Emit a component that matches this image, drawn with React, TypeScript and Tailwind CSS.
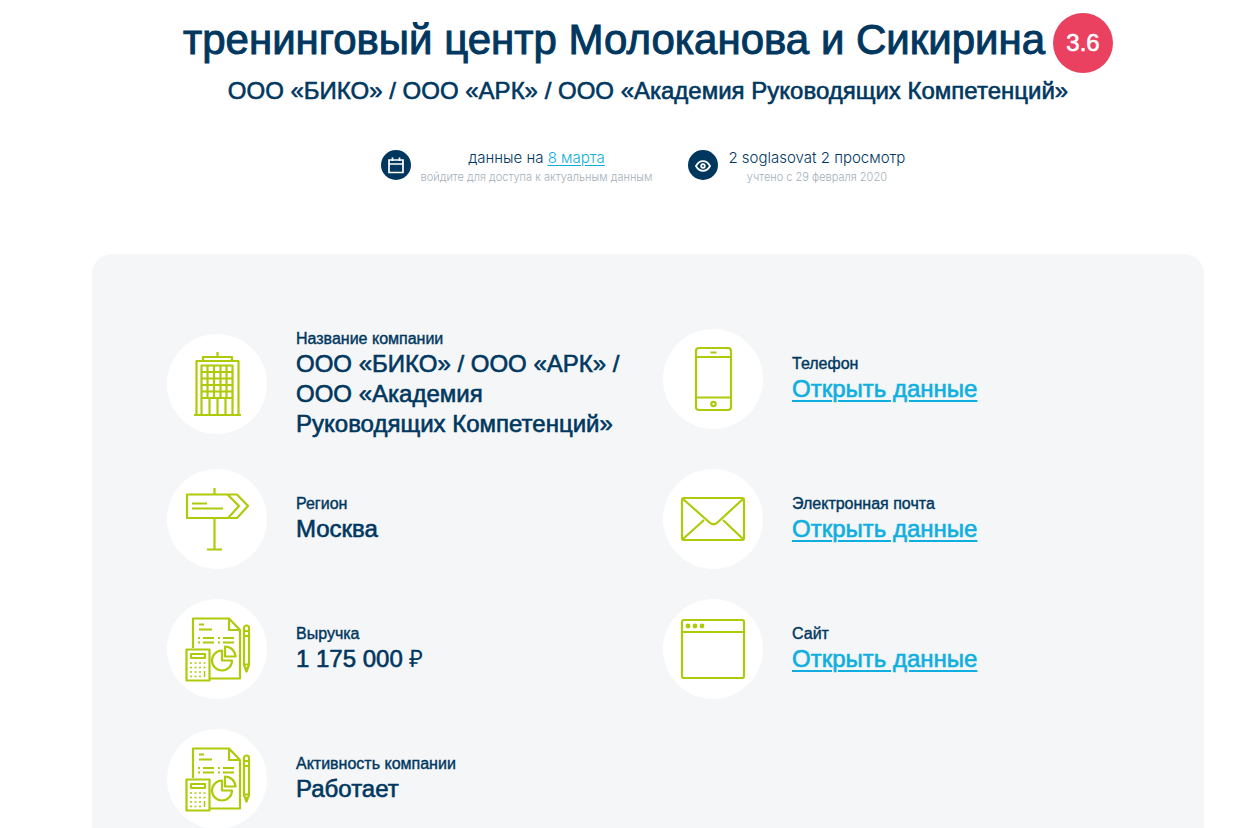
import type { ReactNode } from "react";

const Building = () => (
  <path d="M32.500 0v5M18 9V5h29v4M11.500 63V9h42v54M9 63h47M16.500 63V13.500h31V63M16.500 20h31M16.500 26.500h31M16.500 33h31M16.500 39.500h31M16.500 46h31M22.500 13v33M29 13v33M35.500 13v33M41.500 13v33M24.500 46v17M32.500 46v17M40.500 46v17" />
);

const Sign = () => (
  <path d="M29.500 1v6M2 7.500h50L63 19 52 31H2zM43 8l11 11-11 12M7 16.500h15M7 21.500h31M29.500 31v31M22 62.500h15" />
);

const Report = () => (
  <>
    <path d="M8 31V1.500h36L55 13v48.500H25M44 1.500V13h11M14 7.500h5M14 12.500h13M18 21h11M18 25.500h11M38 21h11M38 25.500h11" />
    <path d="M13 21h2M13 25.500h2M33 21h2M33 25.500h2" />
    <path d="M1.500 32.500h23v31h-23zM6 37h14v4H6z" />
    <path d="M5 46h2M9.500 46h2M14 46h2M18.500 46h2M5 50.500h2M9.500 50.500h2M14 50.500h2M18.500 50.500h2M5 55h2M9.500 55h2M14 55h2M5 59.500h2M9.500 59.500h2M14 59.500h2M19.500 54v6" strokeWidth="1.500" />
    <path d="M37 33.500a10 10 0 1 0 10 10H37zM40 29.500v10h10.500a10.500 10.500 0 0 0-10.500-10z" />
    <path d="M59 11a2.500 2.500 0 0 1 5 0v37l-2.500 6.500L59 48zM59 14h5M59 19h5M59 47.500h5M61.500 50v4" />
  </>
);

const Phone = () => (
  <>
    <rect x="15" y="1" width="35" height="62" rx="3" />
    <path d="M15 10h35M15 50.500h35M29.500 5.500h6" />
    <circle cx="32.500" cy="57" r="2.200" />
  </>
);

const Mail = () => (
  <>
    <rect x="1" y="11" width="62" height="42" rx="2" />
    <path d="M2 12l26 23c3 3 6 3 9 0l25-23M2 52l21-19M62 52L42 33" />
  </>
);

const Browser = () => (
  <>
    <rect x="1" y="3" width="62" height="58" rx="2" />
    <path d="M1 15h62" />
    <g fill="#afca0b" stroke="none">
      <circle cx="7" cy="9" r="2.400" />
      <circle cx="14" cy="9" r="2.400" />
      <circle cx="21" cy="9" r="2.400" />
    </g>
  </>
);

function Item({ icon, label, children }: { icon: ReactNode; label: string; children: ReactNode }) {
  return (
    <div className="flex items-center gap-[29px]">
      <div className="flex size-[100px] shrink-0 items-center justify-center rounded-full bg-white">
        <svg
          viewBox="0 0 64 64"
          className="size-16 overflow-visible"
          fill="none"
          stroke="#afca0b"
          strokeWidth="2.200"
          strokeLinejoin="round"
          aria-hidden="true"
        >
          {icon}
        </svg>
      </div>
      <dl className="min-w-0">
        <dt className="text-base leading-5 [-webkit-text-stroke:0.4px]">{label}</dt>
        <dd className="text-2xl leading-[30px] [-webkit-text-stroke:0.6px]">{children}</dd>
      </dl>
    </div>
  );
}

function OpenData() {
  return (
    <a href="#" className="text-[#0eafe0] underline decoration-2 underline-offset-3">
      Открыть данные
    </a>
  );
}

export default function App() {
  return (
    <main className="h-screen overflow-hidden bg-white pr-[53px] pl-[92px] font-['Liberation_Sans',Arial,sans-serif] text-[#00375f]">
      <header className="flex flex-col items-center pt-[13px]">
        <div className="flex items-center justify-center gap-2">
          <h1 className="pb-[6px] text-[42px] leading-[50px] [-webkit-text-stroke:1px]">
            тренинговый центр Молоканова и Сикирина
          </h1>
          <span className="flex size-[60px] shrink-0 items-center justify-center rounded-full bg-[#e9415f] text-2xl text-white [-webkit-text-stroke:0.6px]">
            3.6
          </span>
        </div>
        <h2 className="mt-[3px] text-2xl leading-[30px] [-webkit-text-stroke:0.6px]">
          ООО «БИКО» / ООО «АРК» / ООО «Академия Руководящих Компетенций»
        </h2>
        <div className="mt-[42px] mr-[10px] flex gap-9 text-center font-['Inter','Liberation_Sans',sans-serif] font-light">
          <div className="flex gap-[10px]">
            <span className="mt-[2px] flex size-[30px] items-center justify-center rounded-full bg-[#00375f]">
              <svg viewBox="0 0 18 18" className="size-[18px]" fill="none" stroke="white" strokeWidth="1.700" aria-hidden="true">
                <path d="M2 4h14v12.500H2zM2 8h14M5.500 1.500V5M12.500 1.500V5" />
              </svg>
            </span>
            <div>
              <p className="text-[15px] leading-5">
                данные на{" "}
                <a href="#" className="text-[#0eafe0] underline underline-offset-2">
                  8 марта
                </a>
              </p>
              <p className="text-[11px] leading-[18px] text-[#a3afba]">войдите для доступа к актуальным данным</p>
            </div>
          </div>
          <div className="flex gap-[10px]">
            <span className="mt-[2px] flex size-[30px] items-center justify-center rounded-full bg-[#00375f]">
              <svg viewBox="0 0 18 18" className="size-[18px]" fill="none" stroke="white" strokeWidth="1.800" aria-hidden="true">
                <path d="M2 10c1.800-3.300 4-4.800 7-4.800s5.200 1.500 7 4.800c-1.800 3.300-4 4.800-7 4.800S3.800 13.300 2 10z" />
                <circle cx="9" cy="10" r="1.800" />
              </svg>
            </span>
            <div>
              <p className="text-[15px] leading-5">2 soglasovat 2 просмотр</p>
              <p className="text-[11px] leading-[18px] text-[#a3afba]">учтено с 29 февраля 2020</p>
            </div>
          </div>
        </div>
      </header>

      <section className="mt-[68px] grid grid-cols-2 items-start gap-[30px] rounded-[20px] bg-[#f4f6f7] p-[75px]">
        <Item icon={<Building />} label="Название компании">
          ООО «БИКО» / ООО «АРК» / ООО «Академия Руководящих Компетенций»
        </Item>
        <Item icon={<Phone />} label="Телефон">
          <OpenData />
        </Item>
        <Item icon={<Sign />} label="Регион">
          Москва
        </Item>
        <Item icon={<Mail />} label="Электронная почта">
          <OpenData />
        </Item>
        <Item icon={<Report />} label="Выручка">
          1 175 000{" "}
          <span className="font-['Liberation_Serif',serif] leading-none [-webkit-text-stroke:0px]">₽</span>
        </Item>
        <Item icon={<Browser />} label="Сайт">
          <OpenData />
        </Item>
        <div className="col-start-1">
          <Item icon={<Report />} label="Активность компании">
            Работает
          </Item>
        </div>
      </section>
    </main>
  );
}
